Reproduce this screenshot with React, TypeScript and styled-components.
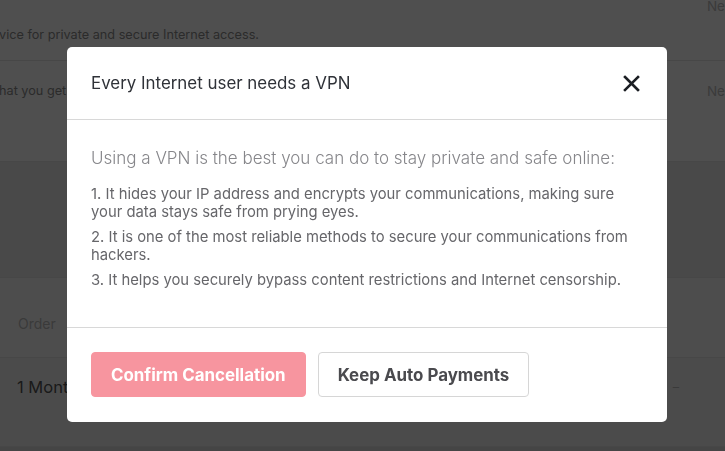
import styled, { createGlobalStyle } from "styled-components";

const GlobalStyle = createGlobalStyle`
  * {
    box-sizing: border-box;
  }
  html, body {
    margin: 0;
    padding: 0;
    width: 100%;
    height: 100%;
    overflow: hidden;
    background: #ffffff;
    font-family: "Inter", "Liberation Sans", sans-serif;
  }
`;

/* the account page that sits behind the dialog */
const Page = styled.div`
  width: 725px;
  height: 451px;
  display: flex;
  flex-direction: column;
  background: #ffffff;
`;

const Row = styled.div<{ $height: number; $bg?: string }>`
  display: flex;
  justify-content: space-between;
  align-items: flex-start;
  height: ${(p) => p.$height}px;
  flex-shrink: 0;
  background: ${(p) => p.$bg ?? "#ffffff"};
  border-bottom: 1px solid #e6e6e6;
`;

const RowText = styled.span<{ $top: number; $left?: number; $size?: number; $color?: string }>`
  margin-top: ${(p) => p.$top}px;
  margin-left: ${(p) => p.$left ?? 0}px;
  font-size: ${(p) => p.$size ?? 12.7}px;
  line-height: 20px;
  color: ${(p) => p.$color ?? "#8a8a8a"};
  white-space: nowrap;
`;

const Rest = styled.div`
  flex: 1;
  background: #dfdfdf;
`;

const Overlay = styled.div`
  position: fixed;
  inset: 0;
  background: rgba(0, 0, 0, 0.69);
  display: flex;
  align-items: flex-start;
  padding: 47px 0 0 67px;
`;

const Modal = styled.div`
  width: 600px;
  background: #ffffff;
  border-radius: 5px;
  display: flex;
  flex-direction: column;
  overflow: hidden;
`;

const Header = styled.div`
  height: 73px;
  display: flex;
  align-items: center;
  justify-content: space-between;
  padding: 0 27px 0 24px;
  border-bottom: 1px solid #d8d8d8;
`;

const Title = styled.h2`
  margin: 0;
  font-size: 16.9px;
  font-weight: 400;
  color: #2f3238;
`;

const CloseButton = styled.button`
  width: 18px;
  height: 18px;
  padding: 0;
  border: 0;
  background: transparent;
  cursor: pointer;
  display: flex;
  align-items: center;
  justify-content: center;
`;

const Body = styled.div`
  padding: 26px 24px 38px 24px;
`;

const Lead = styled.p`
  margin: 0 0 15px 0;
  font-size: 17px;
  line-height: 24px;
  font-weight: 300;
  color: #86868a;
`;

const List = styled.ol`
  margin: 0;
  padding: 0;
  list-style: none;
  display: flex;
  flex-direction: column;
  gap: 7px;
`;

const Item = styled.li`
  font-size: 14.8px;
  line-height: 18px;
  color: #66666a;
`;

const Footer = styled.div`
  display: flex;
  gap: 12px;
  padding: 24px 24px 25px 24px;
  border-top: 1px solid #d8d8d8;
`;

const Button = styled.button<{ $primary?: boolean }>`
  height: 45px;
  padding: 0 19px;
  border-radius: 4px;
  font-family: inherit;
  font-size: 16.9px;
  font-weight: 700;
  cursor: pointer;
  border: 1px solid ${(p) => (p.$primary ? "#f7959f" : "#d6d6d6")};
  background: ${(p) => (p.$primary ? "#f7959f" : "#ffffff")};
  color: ${(p) => (p.$primary ? "#ffffff" : "#4a4a4e")};
`;

const App = () => {
  return (
    <>
      <GlobalStyle />
      <Page>
        <Row $height={61}>
          <RowText $top={25} $left={-1} $color="#8c8c8c">
            vice for private and secure Internet access.
          </RowText>
          <RowText $top={-4} $size={13.5} $color="#bdbdbd">
            Ne
          </RowText>
        </Row>
        <Row $height={101}>
          <RowText $top={20} $left={-1} $color="#8c8c8c">
            hat you get
          </RowText>
          <RowText $top={20} $size={13.5} $color="#bdbdbd">
            Ne
          </RowText>
        </Row>
        <Row $height={116} $bg="#ececec" />
        <Row $height={80} $bg="#f9f9f9">
          <RowText $top={36} $left={18} $size={14} $color="#bbbbbb">
            Order
          </RowText>
        </Row>
        <Row $height={89} $bg="#f3f3f3">
          <RowText $top={19} $left={17} $size={16.5} $color="#555555">
            1 Month
          </RowText>
          <RowText $top={19} $color="#bbbbbb" style={{ marginRight: 46 }}>
            –
          </RowText>
        </Row>
        <Rest />
      </Page>
      <Overlay>
        <Modal>
          <Header>
            <Title>Every Internet user needs a VPN</Title>
            <CloseButton aria-label="Close">
              <svg width="17" height="17" viewBox="0 0 17 17">
                <path
                  d="M2 2 L15 15 M15 2 L2 15"
                  stroke="#1c1f24"
                  strokeWidth="2.6"
                  strokeLinecap="square"
                />
              </svg>
            </CloseButton>
          </Header>
          <Body>
            <Lead>
              Using a VPN is the best you can do to stay private and safe
              online:
            </Lead>
            <List>
              <Item>
                1. It hides your IP address and encrypts your communications,
                making sure your data stays safe from prying eyes.
              </Item>
              <Item>
                2. It is one of the most reliable methods to secure your
                communications from hackers.
              </Item>
              <Item>
                3. It helps you securely bypass content restrictions and
                Internet censorship.
              </Item>
            </List>
          </Body>
          <Footer>
            <Button $primary>Confirm Cancellation</Button>
            <Button>Keep Auto Payments</Button>
          </Footer>
        </Modal>
      </Overlay>
    </>
  );
};

export default App;
